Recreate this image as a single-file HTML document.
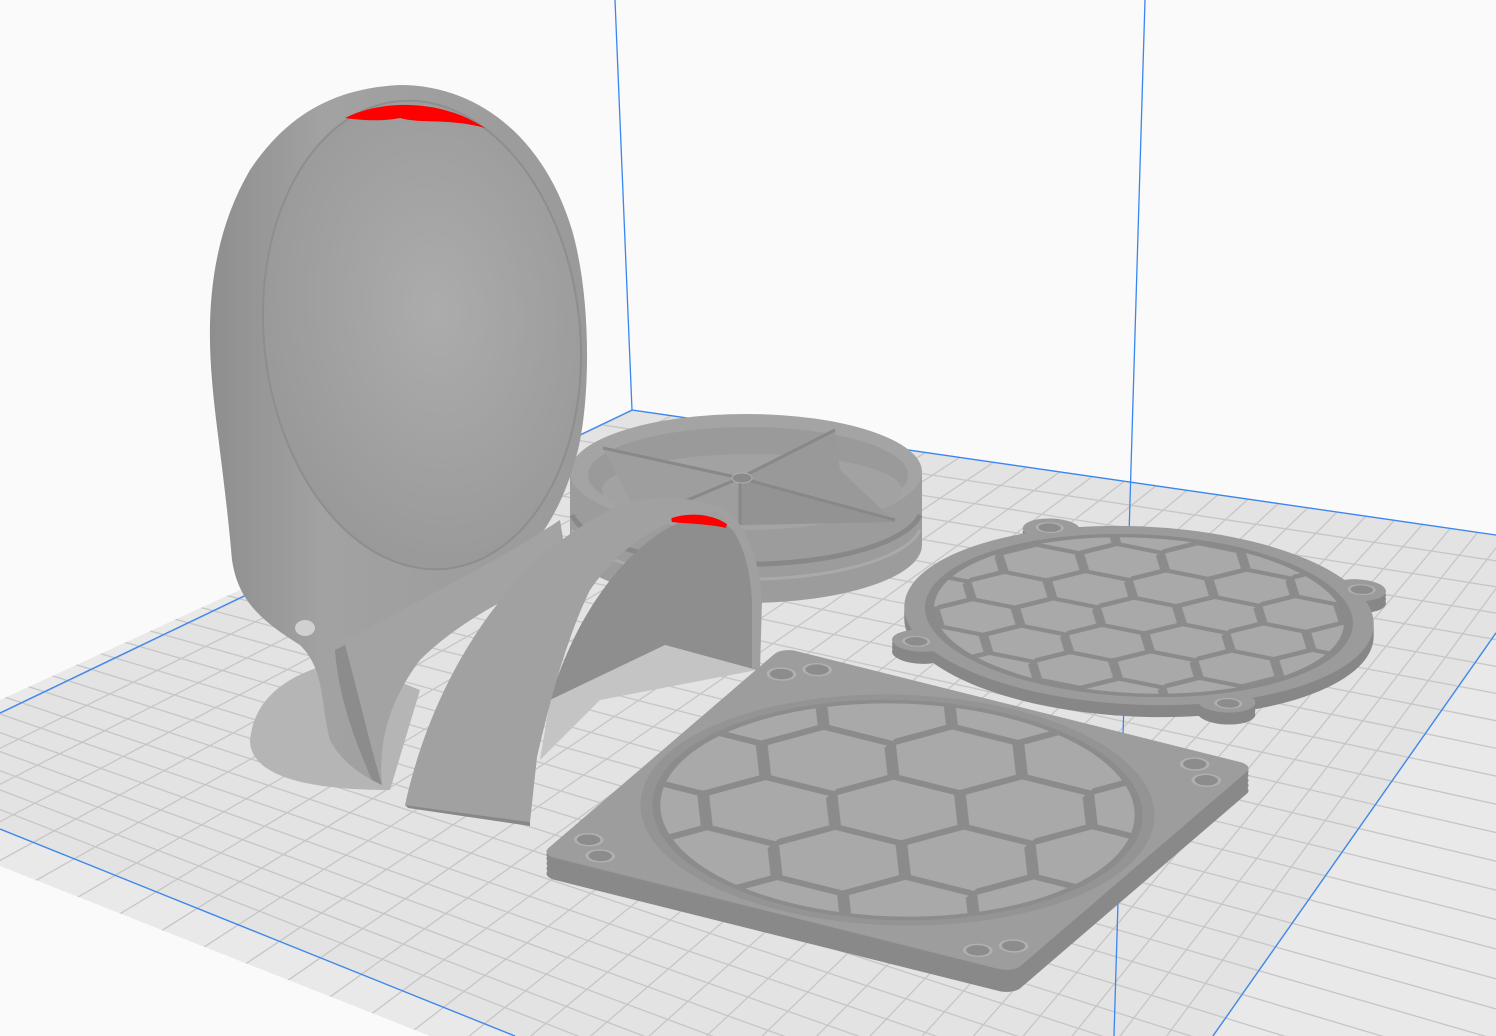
<!DOCTYPE html>
<html><head><meta charset="utf-8"><style>
html,body{margin:0;padding:0;background:#fafafa;width:1496px;height:1036px;overflow:hidden;}
svg{display:block;}
</style></head><body>
<svg id="s" width="1496" height="1036" viewBox="0 0 1496 1036" xmlns="http://www.w3.org/2000/svg">
<defs>
<clipPath id="plane"><polygon points="0,700 632,410 1496,535 1496,1036 430,1036 0,866"/></clipPath>
<pattern id="hexA" width="78" height="45.03" patternUnits="userSpaceOnUse" patternTransform="translate(-26,-22.5)">
<rect width="78" height="45.03" fill="#a9a9a9"/>
<path d="M0,22.52 L13,0 L39,0 L52,22.52 L39,45.03 L13,45.03 Z M52,22.52 L78,22.52" fill="none" stroke="#8b8b8b" stroke-width="5.5"/>
</pattern>
<pattern id="hexB" width="84" height="48.5" patternUnits="userSpaceOnUse" patternTransform="translate(-28,-24.25)">
<rect width="84" height="48.5" fill="#a9a9a9"/>
<path d="M0,24.25 L14,0 L42,0 L56,24.25 L42,48.5 L14,48.5 Z M56,24.25 L84,24.25" fill="none" stroke="#8b8b8b" stroke-width="4.5"/>
</pattern>
<radialGradient id="bowl" cx="0.55" cy="0.45" r="0.6">
<stop offset="0" stop-color="#acacac"/><stop offset="1" stop-color="#989898"/></radialGradient>
<linearGradient id="egg" x1="0" x2="1" y1="0" y2="0">
<stop offset="0" stop-color="#8e8e8e"/><stop offset="0.3" stop-color="#a2a2a2"/><stop offset="1" stop-color="#9a9a9a"/></linearGradient>
<g id="bfShape"><circle r="130"/><circle cx="-92" cy="92" r="16"/><circle cx="92" cy="92" r="16"/><circle cx="92" cy="-92" r="16"/><circle cx="-92" cy="-92" r="16"/></g>
<rect id="ffShape" x="-100" y="-100" width="200" height="200" rx="6"/>
</defs>
<rect width="1496" height="1036" fill="#fafafa"/>
<polygon points="0,700 632,410 1496,535 1496,1036 430,1036 0,866" fill="#e9e9e9"/>
<polygon points="0,713 632,410 1496,535 1496,633 1213,1036 515,1036 0,829" fill="#e3e3e3"/>
<g id="grid" clip-path="url(#plane)" stroke="#c6c6c6" stroke-width="1.3"></g>
<g stroke="#3a86f0" stroke-width="1.3" fill="none">
<line x1="615" y1="0" x2="632" y2="410"/>
<line x1="1145" y1="0" x2="1114" y2="1036"/>
<polyline points="0,713 632,410 1496,535"/>
<line x1="0" y1="829" x2="515" y2="1036"/>
<line x1="1496" y1="633" x2="1213" y2="1036"/>
</g>
<!-- shadows -->
<path d="M250,740 C255,690 300,670 345,660 L420,690 L390,790 C320,790 250,780 250,740 Z" fill="#b5b5b5"/>
<path d="M550,700 L665,645 L757,670 L600,700 L540,760 Z" fill="#c4c4c4"/>
<!-- ring -->
<path d="M570,472 L570,545 A176,58 0 0 0 922,545 L922,472 Z" fill="#9c9c9c"/>
<path d="M572,515 A176,58 0 0 0 920,515" fill="none" stroke="#888" stroke-width="5"/>
<path d="M572,530 A176,58 0 0 0 920,530" fill="none" stroke="#aaa" stroke-width="3"/>
<ellipse cx="746" cy="472" rx="176" ry="58" fill="#a4a4a4"/>
<ellipse cx="748" cy="475" rx="160" ry="48" fill="#9a9a9a"/>
<ellipse cx="752" cy="490" rx="150" ry="36" fill="#a2a2a2"/>
<path d="M603,448 L740,478 L740,525 L640,520 Z" fill="#9e9e9e"/>
<path d="M740,478 L895,522 L740,525 Z" fill="#939393"/>
<path d="M740,478 L835,430 L840,470 L895,522 Z" fill="#999"/>
<path d="M603,448 L740,478 L895,520 M835,430 L740,478 L640,520 M740,478 L740,525" stroke="#888" stroke-width="3" fill="none"/>
<ellipse cx="742" cy="478" rx="10" ry="5" fill="#8a8a8a" stroke="#b0b0b0"/>
<!-- egg -->
<path d="M400,85 C480,85 545,140 572,230 C592,300 590,400 578,450 C565,500 548,530 520,560 C480,585 420,600 385,620 C360,640 350,690 370,760 L382,785 C360,775 340,760 330,740 C320,700 325,670 300,645 C260,620 238,600 232,560 C225,480 215,420 212,380 C205,300 215,230 250,170 C290,110 340,88 400,85 Z" fill="url(#egg)"/>
<path d="M345,640 C420,600 500,560 560,520 L568,570 C520,590 460,620 420,660 C390,700 378,740 382,785 C365,740 350,690 345,640 Z" fill="#a3a3a3"/>
<path d="M345,645 C360,700 370,745 382,785 L372,780 C350,730 338,690 335,650 Z" fill="#8c8c8c"/>
<ellipse cx="422" cy="335" rx="158" ry="235" transform="rotate(-6 422 335)" fill="url(#bowl)" stroke="#8e8e8e" stroke-width="2"/>
<path d="M345,118 C380,100 440,98 485,128 C450,118 420,124 400,118 C380,122 360,120 345,118 Z" fill="#ff0000"/>
<ellipse cx="305" cy="628" rx="10" ry="8" fill="#d0d0d0"/>
<!-- arch -->
<path d="M550,700 C580,600 640,530 700,515 C740,520 758,560 760,600 L757,670 L665,645 Z" fill="#8e8e8e"/>
<path d="M720,505 C745,520 760,560 762,600 L760,670 L752,668 L752,600 C750,560 738,525 712,510 Z" fill="#a0a0a0"/>
<path d="M405,805 C430,690 500,560 620,505 C650,495 690,495 720,508 L670,523 C640,535 613,557 590,590 C567,637 550,700 537,757 L530,822 Z" fill="#a1a1a1"/>
<path d="M405,805 L530,822 L530,826 L408,808 Z" fill="#888"/>
<path d="M672,520 C690,514 712,516 726,526 C710,522 690,522 672,520 Z" fill="#ff0000" stroke="#ff0000" stroke-width="4"/>
<!-- back fan extrusion -->
<g fill="#878787">
<g transform="translate(0,12)"><use href="#bfShape" transform="matrix(1.66,0.33,0.71,-0.605,1139,615.5)"/></g>
<g transform="translate(0,8)"><use href="#bfShape" transform="matrix(1.66,0.33,0.71,-0.605,1139,615.5)"/></g>
<g transform="translate(0,4)"><use href="#bfShape" transform="matrix(1.66,0.33,0.71,-0.605,1139,615.5)"/></g>
</g>
<g transform="matrix(1.66,0.33,0.71,-0.605,1139,615.5)">
<use href="#bfShape" fill="#9b9b9b"/>
<g fill="#8c8c8c" stroke="#b0b0b0" stroke-width="1.5">
<circle cx="-94" cy="94" r="7"/><circle cx="94" cy="94" r="7"/><circle cx="94" cy="-94" r="7"/><circle cx="-94" cy="-94" r="7"/>
</g>
<circle r="116" fill="url(#hexA)" stroke="#8a8a8a" stroke-width="5"/>
</g>
<!-- front fan extrusion -->
<g fill="#898989">
<g transform="translate(0,22)"><use href="#ffShape" transform="matrix(2.36,0.59,1.205,-1.035,897.5,810)"/></g>
<g transform="translate(0,17)"><use href="#ffShape" transform="matrix(2.36,0.59,1.205,-1.035,897.5,810)"/></g>
<g transform="translate(0,12)"><use href="#ffShape" transform="matrix(2.36,0.59,1.205,-1.035,897.5,810)"/></g>
<g transform="translate(0,7)"><use href="#ffShape" transform="matrix(2.36,0.59,1.205,-1.035,897.5,810)"/></g>
<g transform="translate(0,3)"><use href="#ffShape" transform="matrix(2.36,0.59,1.205,-1.035,897.5,810)"/></g>
</g>
<g transform="matrix(2.36,0.59,1.205,-1.035,897.5,810)">
<use href="#ffShape" fill="#9d9d9d"/>
<circle r="97" fill="#949494"/>
<circle r="91" fill="url(#hexB)" stroke="#8c8c8c" stroke-width="3"/>
<g fill="#8c8c8c" stroke="#b0b0b0" stroke-width="1.2">
<circle cx="-90" cy="-80" r="5"/><circle cx="-80" cy="-90" r="5"/>
<circle cx="90" cy="80" r="5"/><circle cx="80" cy="90" r="5"/>
<circle cx="-90" cy="80" r="5"/><circle cx="-80" cy="90" r="5"/>
<circle cx="90" cy="-80" r="5"/><circle cx="80" cy="-90" r="5"/>
</g>
</g>
</svg>
<script>
(function(){
var g=document.getElementById('grid'),ns='http://www.w3.org/2000/svg';
function L(a,b,c,d){var l=document.createElementNS(ns,'line');l.setAttribute('x1',a);l.setAttribute('y1',b);l.setAttribute('x2',c);l.setAttribute('y2',d);g.appendChild(l);}
var V1=[-1982,32],V2=[2169,-326],N=30,i,t,px,py;
for(i=0;i<=N;i++){t=i/N;px=-172+t*(1231);py=829+0.402*(px);
 L(V2[0],V2[1],V2[0]+(px-V2[0])*2,V2[1]+(py-V2[1])*2);}
for(i=0;i<=N;i++){t=i/N;px=1558+t*(1059-1558);py=544+t*(1255-544);
 L(V1[0],V1[1],V1[0]+(px-V1[0])*1.3,V1[1]+(py-V1[1])*1.3);}
})();
</script>
</body></html>
